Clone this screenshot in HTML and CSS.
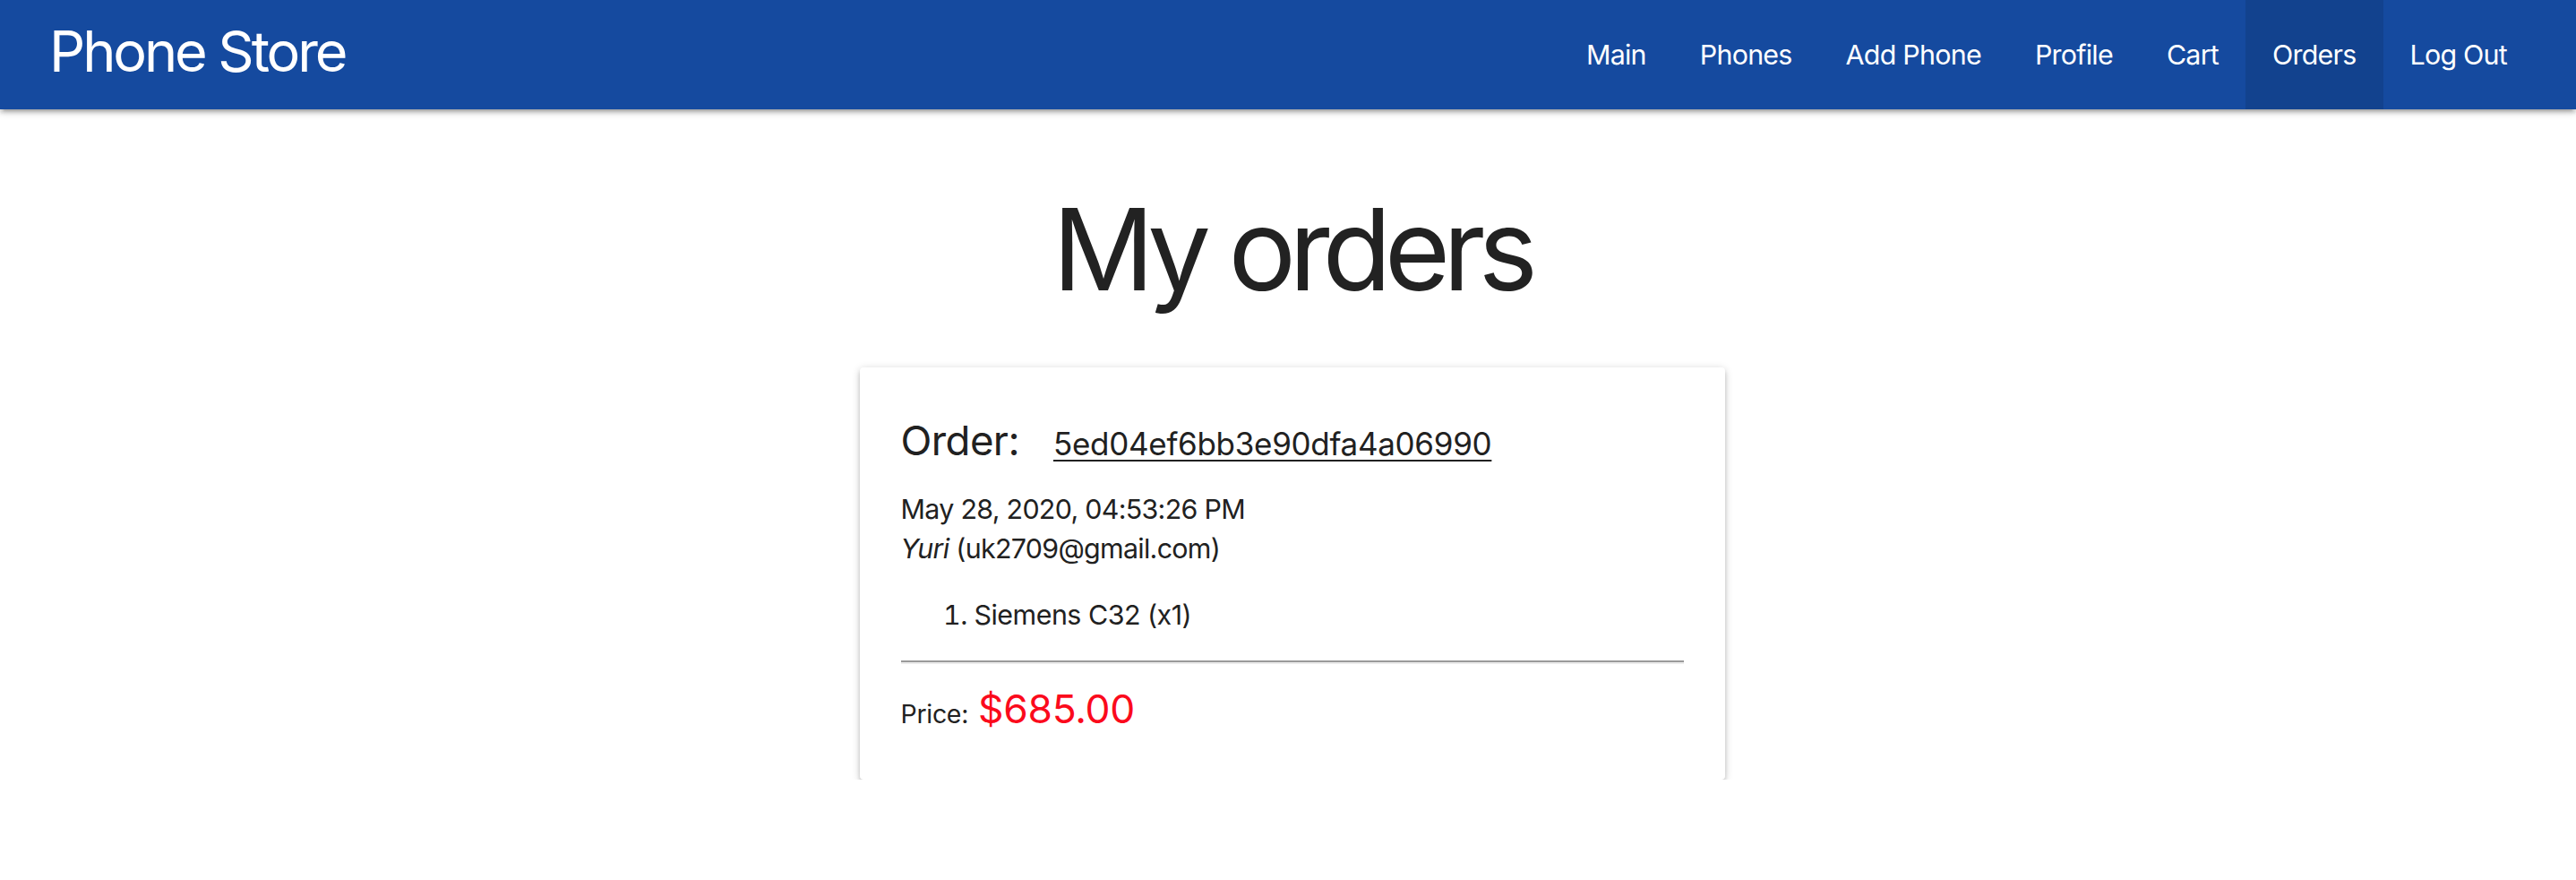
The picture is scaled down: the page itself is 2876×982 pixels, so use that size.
FILE: index.html
```html
<!DOCTYPE html>
<html lang="en">
<head>
<meta charset="utf-8">
<title>Phone Store</title>
<link rel="stylesheet" href="styles.css">
</head>
<body>
<nav class="nav">
  <a class="brand" href="#">Phone Store</a>
  <ul class="menu">
    <li><a href="#">Main</a></li>
    <li><a href="#">Phones</a></li>
    <li><a href="#">Add Phone</a></li>
    <li><a href="#">Profile</a></li>
    <li><a href="#">Cart</a></li>
    <li class="active"><a href="#">Orders</a></li>
    <li><a href="#">Log Out</a></li>
  </ul>
</nav>
<main class="page">
  <h1 class="title">My orders</h1>
  <div class="card">
    <div class="card-head">
      <span class="card-title">Order:</span>
      <a class="order-id" href="#">5ed04ef6bb3e90dfa4a06990</a>
    </div>
    <p class="line date">May 28, 2020, 04:53:26 PM</p>
    <p class="line user"><em>Yuri</em> (uk2709@gmail.com)</p>
    <ol class="items"><li>Siemens C32 (x1)</li></ol>
    <hr class="divider">
    <div class="price"><span class="price-label">Price:</span><span class="amount">$685.00</span></div>
  </div>
</main>
</body>
</html>
```

FILE: styles.css
```css
html, body {
  margin: 0;
  padding: 0;
  background: #ffffff;
}
body {
  font-family: "Inter", "Roboto", "Noto Sans", sans-serif;
  color: #212121;
}
.nav {
  height: 122px;
  background: #154a9f;
  display: flex;
  align-items: stretch;
  justify-content: space-between;
  padding: 0 47px 0 55px;
  box-shadow: 0 4px 4px 0 rgba(0,0,0,.14), 0 6px 2px -4px rgba(0,0,0,.12), 0 2px 10px 0 rgba(0,0,0,.2);
  position: relative;
  z-index: 2;
}
.brand {
  color: #fff;
  text-decoration: none;
  font-size: 63px;
  line-height: 114px;
  letter-spacing: -3.1px;
}
.menu {
  list-style: none;
  margin: 0;
  padding: 0;
  display: flex;
}
.menu a {
  display: block;
  color: #fff;
  text-decoration: none;
  font-size: 30.4px;
  letter-spacing: -0.75px;
  line-height: 122px;
  padding: 0 30px;
}
.menu .active a {
  background: rgba(0,0,0,0.1);
}
.page {
  display: flex;
  flex-direction: column;
  align-items: center;
}
.title {
  margin: 86px 0 62px;
  font-size: 126px;
  line-height: 140px;
  font-weight: 400;
  color: #222;
  letter-spacing: -8px;
  text-indent: 8px;
}
.card {
  width: 966px;
  box-sizing: border-box;
  margin-left: 9px;
  padding: 46px 46px 48px 46px;
  border-radius: 4px;
  background: #fff;
  box-shadow: 0 4px 4px 0 rgba(0,0,0,.14), 0 6px 2px -4px rgba(0,0,0,.12), 0 2px 10px 0 rgba(0,0,0,.2);
}
.card-head {
  display: flex;
  align-items: baseline;
  line-height: 71px;
}
.card-title {
  font-size: 45.6px;
  letter-spacing: -0.6px;
  font-weight: 400;
}
.order-id {
  margin-left: 38px;
  font-size: 35px;
  letter-spacing: -0.3px;
  color: #212121;
  text-decoration: underline;
  text-underline-offset: 5px;
  text-decoration-thickness: 2px;
}
.line {
  margin: 0;
  font-size: 30.4px;
  letter-spacing: -0.7px;
  line-height: 44px;
}
.date {
  margin-top: 15px;
}
.user em {
  font-style: italic;
}
.items {
  margin: 30px 0 0;
  padding-left: 82px;
  font-size: 30.4px;
  letter-spacing: -0.5px;
  line-height: 44px;
}
.divider {
  margin: 29px 0 0;
  border: 0;
  border-top: 2px solid #9a9a9a;
  border-bottom: 2px solid #ececec;
  height: 0;
}
.price {
  margin-top: 25px;
  display: flex;
  align-items: baseline;
  gap: 11px;
}
.price-label {
  font-size: 28.5px;
  letter-spacing: -0.3px;
  line-height: 50px;
}
.amount {
  font-size: 44.4px;
  letter-spacing: -0.3px;
  line-height: 50px;
  color: #fb0a1c;
}
```
